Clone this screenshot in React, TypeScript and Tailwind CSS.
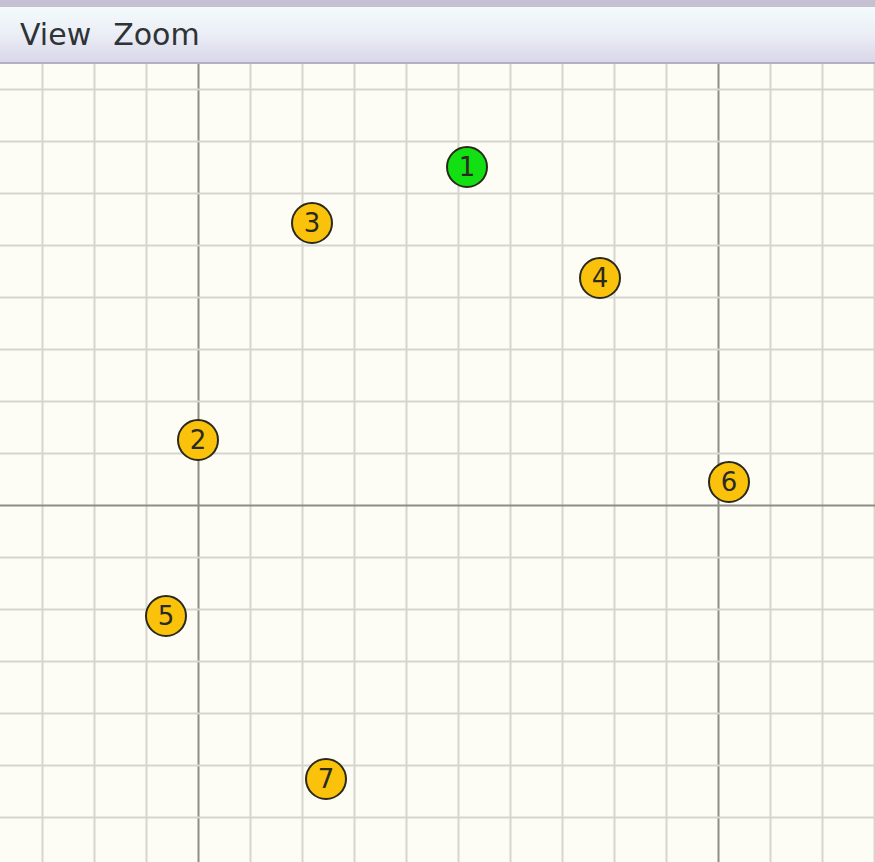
const nodes = [
  { id: 1, x: 467, y: 167, green: true },
  { id: 3, x: 312, y: 223 },
  { id: 4, x: 600, y: 278 },
  { id: 2, x: 198, y: 440 },
  { id: 6, x: 729, y: 482 },
  { id: 5, x: 166, y: 616 },
  { id: 7, x: 326, y: 779 },
];

const TOP = 64;
const STEP = 52;

function Grid() {
  const v: number[] = [];
  for (let x = 198 - STEP * 4; x < 875; x += STEP) v.push(x);
  const h: number[] = [];
  for (let y = 505 - STEP * 9; y < 862; y += STEP) h.push(y - TOP);
  return (
    <svg className="absolute inset-0" width={875} height={862 - TOP}>
      {v.map((x) => (
        <line key={"v" + x} x1={x + 0.5} y1={0} x2={x + 0.5} y2={862} stroke={x === 198 || x === 718 ? "#8e8e88" : "#d6d6cf"} strokeWidth={2} />
      ))}
      {h.map((y) => (
        <line key={"h" + y} x1={0} y1={y + 0.5} x2={875} y2={y + 0.5} stroke={y === 505 - TOP ? "#8e8e88" : "#d6d6cf"} strokeWidth={2} />
      ))}
    </svg>
  );
}

export default function App() {
  return (
    <div className="w-[875px] h-[862px] flex flex-col overflow-hidden bg-[#fdfdf6] font-['DejaVu_Sans',sans-serif]">
      <div className="h-[7px] bg-[#c5c1d2]" />
      <div className="h-[55px] flex items-center px-[20px] gap-[22px] text-[30px] text-[#2e3436] bg-gradient-to-b from-[#f3fbfb] via-[#ebeef6] to-[#d9d6e9]">
        <span>View</span>
        <span>Zoom</span>
      </div>
      <div className="h-[2px] bg-[#b3afc4]" />
      <div className="relative flex-1">
        <Grid />
        {nodes.map((n) => (
          <div
            key={n.id}
            className={`absolute w-[42px] h-[42px] -ml-[21px] -mt-[21px] rounded-full border-2 border-[#2a2a1a] flex items-center justify-center text-[26px] leading-none text-[#2a2a22] ${n.green ? "bg-[#12e012]" : "bg-[#fbc20c]"}`}
            style={{ left: n.x, top: n.y - TOP }}
          >
            {n.id}
          </div>
        ))}
      </div>
    </div>
  );
}
